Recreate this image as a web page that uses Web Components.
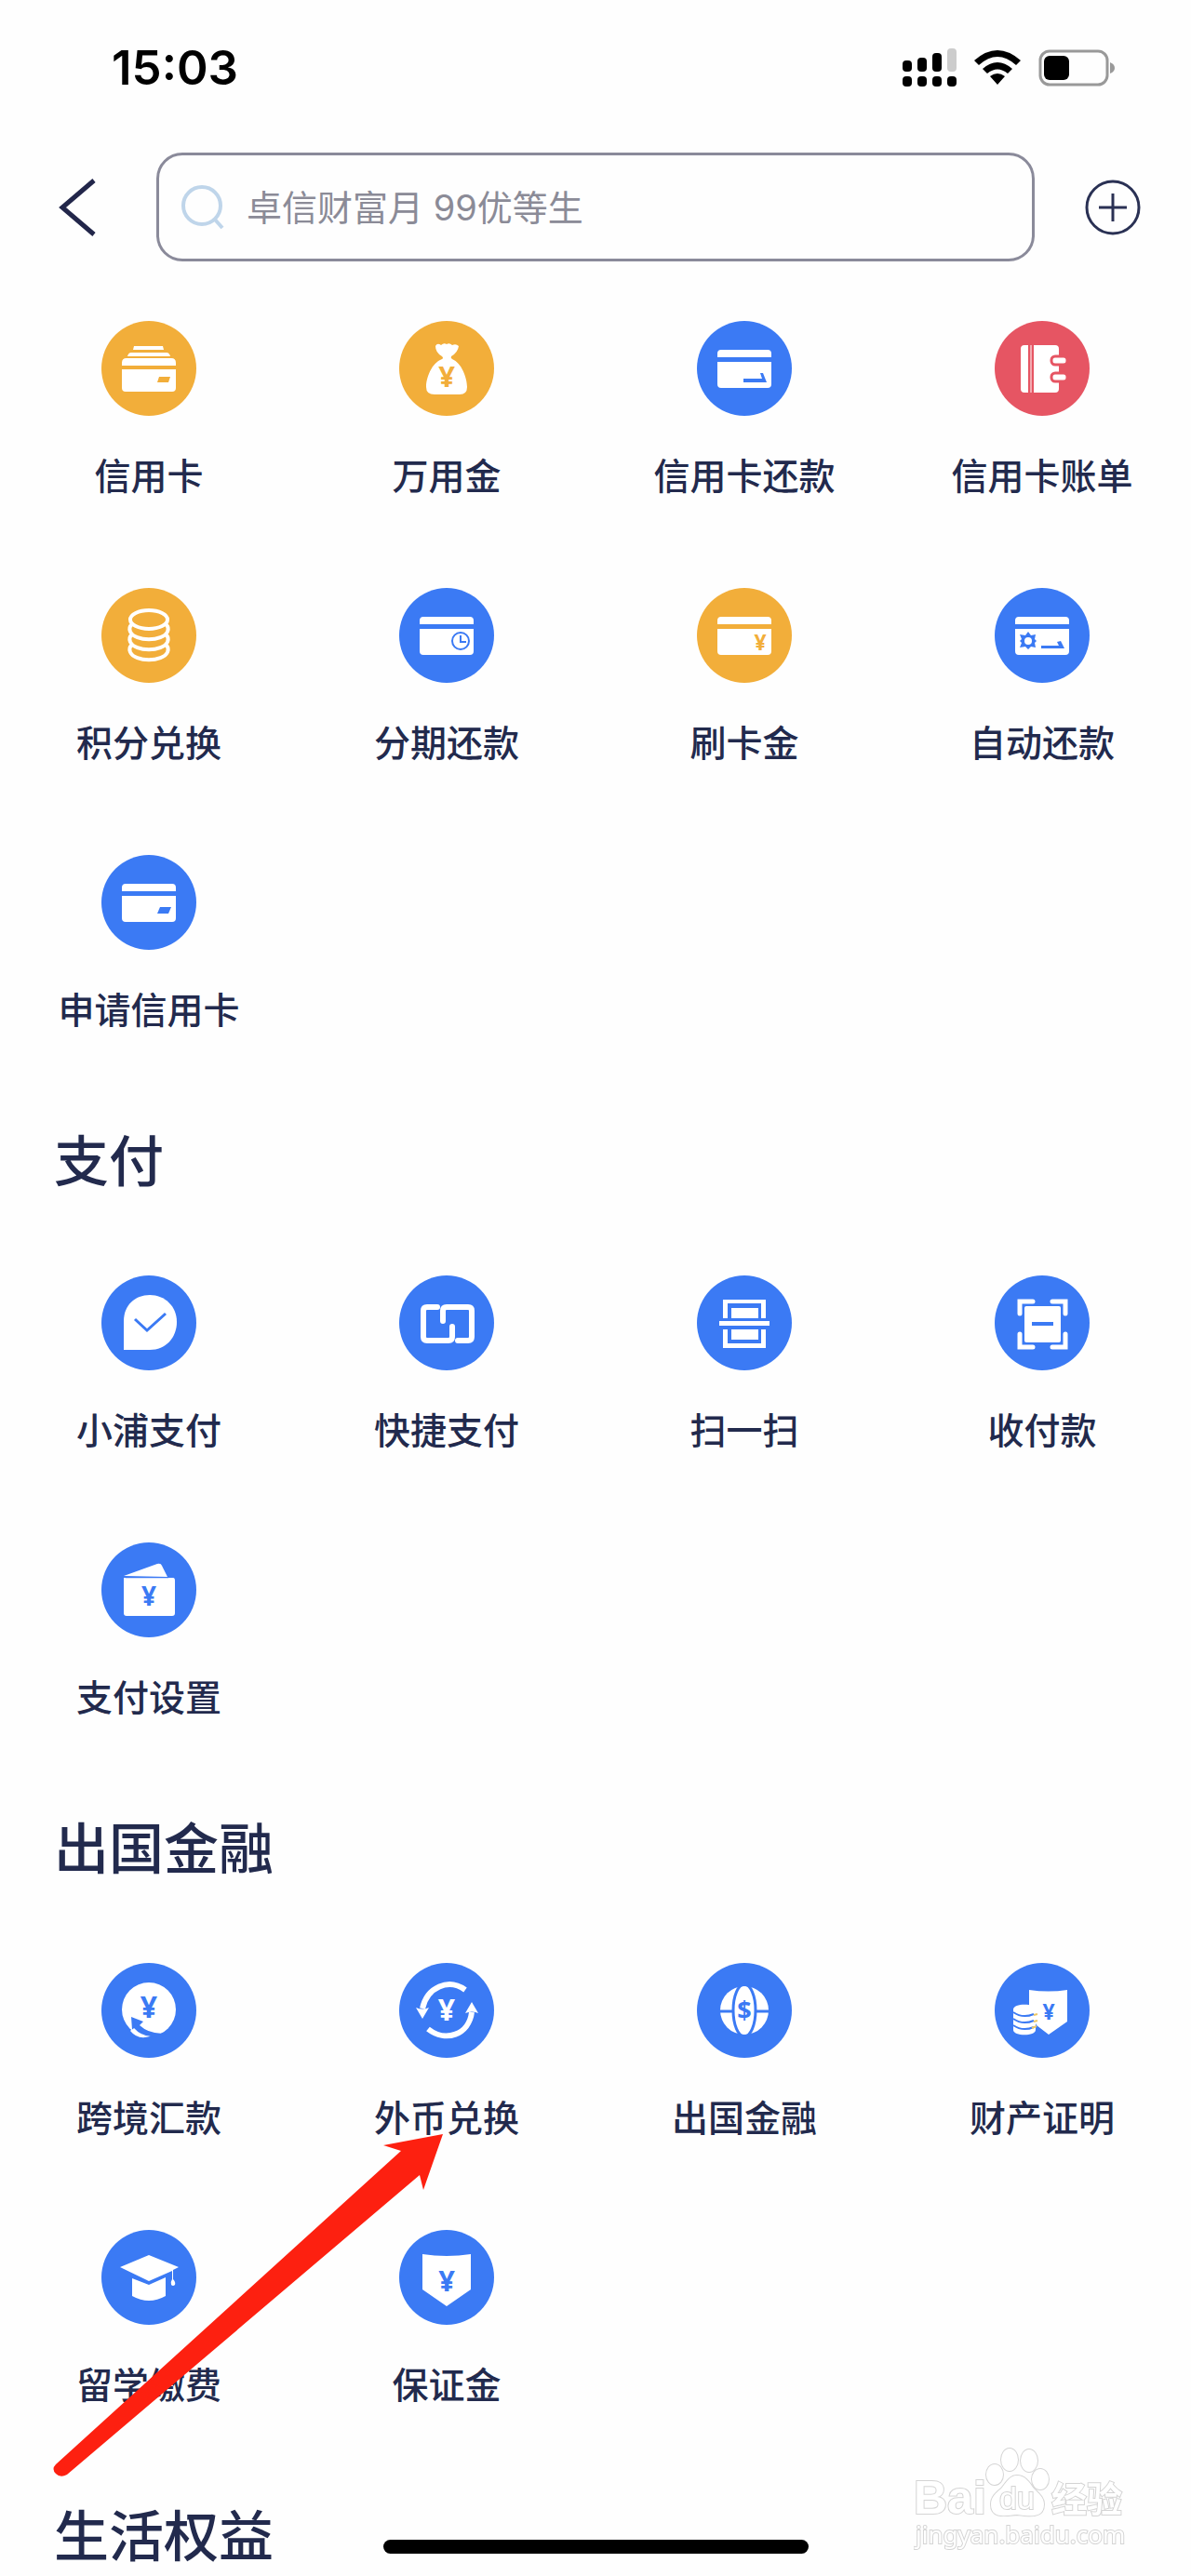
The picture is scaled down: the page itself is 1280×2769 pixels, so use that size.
<!DOCTYPE html>
<html lang="zh-CN">
<head>
<meta charset="utf-8">
<meta name="viewport" content="width=device-width, initial-scale=1">
<title>全部功能</title>
<style>
  body {
    margin: 0;
    background: #fefefe;
    color: #222a4d;
    font-family: "Noto Sans CJK SC", sans-serif;
  }
</style>
</head>
<body>
<bank-page></bank-page>

<script>
  const card = `<path d="M22 39v-4a4 4 0 0 1 4-4h50a4 4 0 0 1 4 4v4zM22 44h58v24a4 4 0 0 1-4 4H26a4 4 0 0 1-4-4z"/>`;
  const yen = (x, y, size, fill = "var(--tone)") =>
    `<text x="${x}" y="${y}" font-size="${size}" style="fill:${fill}">¥</text>`;

  // glyphs are drawn in white on a 102 x 102 disc, --tone is the disc colour
  const ICONS = {
    cards: `
      <path d="M34 31l1-4h31l1 4zM28 38q1-4 4-4h38q3 0 4 4zM22 48v-3q0-5 5-5h48q5 0 5 5v3zM22 52h58v20a4 4 0 0 1-4 4H26a4 4 0 0 1-4-4z"/>
      <path class="tone" d="M62 60h12l-2 6H60z"/>`,
    bag: `
      <path d="M39 27q2-4 6-1 3-3 6-1 3-2 6 1 4-2 7 1-1 7-8 11-1 2 1 3c10 4 16 20 16 30q0 8-8 8H38q-9 0-9-8c0-10 6-26 17-30q2-1 0-3-7-4-7-11z"/>
      ${yen(51, 71, 31)}`,
    repay: `${card}<path class="tone" d="M50 66v-4h20l-2-6h3l4 10z"/>`,
    bill: `
      <path d="M36 26v51h-4q-4 0-4-4V30q0-4 4-4zM42 26h23q4 0 4 4v43q0 4-4 4H42z"/>
      <path d="M38 26h2v51h-2z" opacity=".5"/>
      <g class="tone-line" stroke-width="3"><rect x="61" y="38" width="17" height="9" rx="4"/><rect x="61" y="56" width="17" height="9" rx="4"/></g>`,
    coins: `
      <g class="line" stroke-width="4">
        <ellipse cx="51" cy="34" rx="20" ry="10"/>
        <path d="M33 39q-4 3-2 8c5 11 35 11 40 0q2-5-2-8M33 50q-4 3-2 8c5 11 35 11 40 0q2-5-2-8M33 61q-4 3-2 8c5 11 35 11 40 0q2-5-2-8"/>
      </g>`,
    period: `${card}
      <g class="tone-line" stroke-width="2"><circle cx="66" cy="57" r="9"/><path d="M66 51v7h6"/></g>`,
    cash: `${card}${yen(68, 67, 23)}`,
    auto: `${card}
      <path class="tone" d="M36 47l3 4 5-1-1 5 2 2-2 2 1 5-5-1-3 3-3-3-6 1 2-5-2-2 2-2-2-5 6 1z"/>
      <circle cx="36" cy="57" r="4"/>
      <path class="tone" d="M50 65v-3h19l-2-4 4-1 4 8z"/>`,
    apply: `${card}<path class="tone" d="M63 56h12l-3 7H60z"/>`,
    check: `
      <path d="M24 80V49C24 32 36 21 52 21s29 12 29 29-12 30-29 30z"/>
      <path class="tone-line bare" stroke-width="3" d="M36 47l13 12 20-18"/>`,
    quick: `
      <g class="line" stroke-width="6">
        <path d="M41 34H30q-4 0-4 4v28q0 4 4 4h23q4 0 4-4V55"/>
        <path d="M47 49V38q0-4 4-4h23q4 0 4 4v28q0 4-4 4H63"/>
      </g>`,
    scan: `
      <path d="M28 46V26h46v20h-5V30H33v16zM28 58v20h46V58h-5v15H33V58zM37 35h29v11H37zM37 58h29v11H37zM24 49h54v5H24z"/>`,
    receive: `
      <g class="line" stroke-width="5">
        <path d="M27 41V28h14M62 28h14v13M76 63v14H62M41 77H27V63"/>
      </g>
      <rect x="32" y="33" width="39" height="39" rx="2"/>
      <path class="tone-line bare" stroke-width="4" d="M40 52h23"/>`,
    wallet: `
      <path d="M24 36l36-13q4-1 5 2l6 12zM26 38h51q2 0 2 3v35q0 3-3 3H27q-3 0-3-3V38z"/>
      <path class="tone-line bare" stroke-width="1" d="M26 38h46" opacity=".5"/>
      ${yen(51, 68, 28)}`,
    remit: `
      <circle cx="51" cy="50" r="29"/>
      <path class="tone" d="M32 58l13 5-4 4q12 11 30 8-7 5-18 4-11-1-18-9l-2 2z"/>
      <path d="M33 71q7 7 19 8-13 4-21-6z"/>
      ${yen(51, 59, 32)}`,
    exchange: `
      <path class="line bare" stroke-width="6" d="M71 29C53 16 30 26 25 49M31 71c19 15 44 6 47-18"/>
      <path d="M18 48q7 3 14 0l-7 12zM71 54q7-3 14 0l-7-12z"/>
      ${yen(51, 62, 32, "#fff")}`,
    globe: `
      <circle cx="51" cy="51" r="26"/>
      <g class="tone-line bare" stroke-width="3"><ellipse cx="51" cy="51" rx="12" ry="28"/><path d="M24 52h15M63 52h15"/></g>
      <text x="51" y="61" font-size="27" style="fill:var(--tone)">$</text>`,
    proof: `
      <path d="M37 29q21 3 41 0v34L58 77 45 67 37 50z"/>
      <path d="M20 50c0-7 24-7 24 0v22c0 7-24 7-24 0z"/>
      <path class="tone-line bare" stroke-width="2" d="M20 53q10 7 22 2M20 60q10 7 22 2M20 67q10 7 22 2"/>
      <path d="M42 56l4-1M42 63l4-1M40 70l5-2" style="stroke:#ecc765;stroke-width:2"/>
      ${yen(58, 61, 23)}`,
    study: `
      <path d="M20 40l31-13 32 13-6 3v10q3 3 2 6-2 2-4 0-1-3 1-6v-9L51 55z"/>
      <path d="M33 52l18 7 18-8v20q-18 10-36 0z"/>`,
    deposit: `
      <path d="M25 26q26 4 52 0v38L51 82 25 64z"/>
      ${yen(51, 66, 31)}`
  };

  const TONES = { blue: "#3b7af4", gold: "#f2ae3a", red: "#e65563" };

  const SECTIONS = [
    {
      title: "",
      items: [
        ["信用卡", "cards", "gold"],
        ["万用金", "bag", "gold"],
        ["信用卡还款", "repay", "blue"],
        ["信用卡账单", "bill", "red"],
        ["积分兑换", "coins", "gold"],
        ["分期还款", "period", "blue"],
        ["刷卡金", "cash", "gold"],
        ["自动还款", "auto", "blue"],
        ["申请信用卡", "apply", "blue"]
      ]
    },
    {
      title: "支付",
      items: [
        ["小浦支付", "check", "blue"],
        ["快捷支付", "quick", "blue"],
        ["扫一扫", "scan", "blue"],
        ["收付款", "receive", "blue"],
        ["支付设置", "wallet", "blue"]
      ]
    },
    {
      title: "出国金融",
      items: [
        ["跨境汇款", "remit", "blue"],
        ["外币兑换", "exchange", "blue"],
        ["出国金融", "globe", "blue"],
        ["财产证明", "proof", "blue"],
        ["留学缴费", "study", "blue"],
        ["保证金", "deposit", "blue"]
      ]
    },
    { title: "生活权益", items: [] }
  ];

  class StatusBar extends HTMLElement {
    constructor() {
      super();
      this.attachShadow({ mode: "open" });
      this.shadowRoot.innerHTML = `
        <style>
          :host {
            display: flex;
            justify-content: space-between;
            align-items: center;
            height: 146px;
            padding: 0 82px 0 120px;
            color: #000;
          }
          time {
            font: 600 51px/60px Inter, sans-serif;
          }
          .icons {
            display: flex;
            align-items: center;
            gap: 19px;
          }
          svg {
            display: block;
          }
        </style>
        <time>15:03</time>
        <div class="icons">
          <svg width="58" height="42" viewBox="0 0 58 42">
            <rect y="13" width="10" height="12" rx="4"/>
            <rect x="16" y="10" width="10" height="15" rx="4"/>
            <rect x="32" y="5" width="10" height="20" rx="4"/>
            <rect x="48" width="10" height="25" rx="4" fill="#ccc"/>
            <rect y="30" width="10" height="11" rx="4"/>
            <rect x="16" y="30" width="10" height="11" rx="4"/>
            <rect x="32" y="30" width="10" height="11" rx="4"/>
            <rect x="48" y="30" width="10" height="11" rx="4"/>
          </svg>
          <svg width="50" height="38" viewBox="0 0 50 38">
            <path d="M0 11Q25-11 50 11l-5 5Q25-2 5 16zM9 20q16-14 32 0l-5 5q-11-9-22 0zM17 28q8-6 16 0l-8 9z"/>
          </svg>
          <svg width="82" height="40" viewBox="0 0 82 40">
            <rect x="2" y="2" width="72" height="36" rx="10" fill="none" stroke="#999" stroke-width="3"/>
            <rect x="6" y="7" width="27" height="26" rx="6"/>
            <path d="M77 14q5 2 5 6t-5 6z" fill="#999"/>
          </svg>
        </div>
      `;
    }
  }
  customElements.define("status-bar", StatusBar);

  class SearchHeader extends HTMLElement {
    constructor() {
      super();
      this.attachShadow({ mode: "open" });
      this.shadowRoot.innerHTML = `
        <style>
          :host {
            display: flex;
            align-items: center;
            padding: 18px 54px 0 58px;
          }
          button {
            flex: none;
            padding: 0;
            border: 0;
            background: none;
          }
          svg {
            display: block;
            fill: none;
          }
          label {
            flex: 1;
            min-width: 0;
            box-sizing: border-box;
            display: flex;
            align-items: center;
            gap: 24px;
            height: 117px;
            margin: 0 54px 0 62px;
            padding: 0 24px;
            border: 3px solid #8a8a9a;
            border-radius: 28px;
          }
          input {
            flex: 1;
            min-width: 0;
            padding: 0;
            border: 0;
            outline: 0;
            background: none;
            color: inherit;
            font: 400 38px/56px Inter, "Noto Sans CJK SC", sans-serif;
          }
          input::placeholder {
            color: #8b8b97;
            opacity: 1;
          }
        </style>
        <button aria-label="返回">
          <svg width="48" height="64" viewBox="0 0 48 64" stroke="#22264a" stroke-width="5"><path d="M43 3L9 32l34 29"/></svg>
        </button>
        <label>
          <svg width="46" height="48" viewBox="0 0 46 48" stroke="#bfd5ea" stroke-width="4"><circle cx="22" cy="22" r="20"/><path d="M36 37l8 9"/></svg>
          <input type="search" aria-label="搜索" placeholder="卓信财富月 99优等生">
        </label>
        <button aria-label="更多">
          <svg width="60" height="60" viewBox="0 0 60 60" stroke="#2a3154" stroke-width="3"><circle cx="30" cy="30" r="28"/><path d="M30 15v30M15 30h30"/></svg>
        </button>
      `;
    }
  }
  customElements.define("search-header", SearchHeader);

  class FeatureTile extends HTMLElement {
    connectedCallback() {
      const root = this.attachShadow({ mode: "open" });
      root.innerHTML = `
        <style>
          :host {
            display: block;
            min-width: 0;
            --tone: ${TONES[this.getAttribute("tone")]};
          }
          a {
            display: flex;
            flex-direction: column;
            align-items: center;
            gap: 34px;
            color: inherit;
            text-decoration: none;
            font-size: 39px;
            font-weight: 500;
            line-height: 56px;
            white-space: nowrap;
          }
          svg {
            display: block;
            width: 102px;
            height: 102px;
            border-radius: 50%;
            background: var(--tone);
            fill: #fff;
          }
          text {
            font-family: "Noto Sans", sans-serif;
            font-weight: 700;
            text-anchor: middle;
          }
          .tone { fill: var(--tone); }
          .line { fill: none; stroke: #fff; stroke-linecap: round; }
          .tone-line { stroke: var(--tone); }
          .bare { fill: none; stroke-linecap: butt; }
        </style>
        <a href="#">
          <svg viewBox="0 0 102 102" aria-hidden="true">${ICONS[this.getAttribute("icon")]}</svg>
          <slot></slot>
        </a>
      `;
    }
  }
  customElements.define("feature-tile", FeatureTile);

  class FeatureSection extends HTMLElement {
    constructor() {
      super();
      this.attachShadow({ mode: "open" });
      this.shadowRoot.innerHTML = `
        <style>
          :host {
            display: block;
          }
          ::slotted(h2) {
            margin: 94px 58px 86px;
            font-size: 59px;
            font-weight: 500;
            line-height: 80px;
          }
          .grid {
            display: grid;
            grid-template-columns: repeat(4, 1fr);
            row-gap: 95px;
          }
        </style>
        <slot name="title"></slot>
        <div class="grid"><slot></slot></div>
      `;
    }
  }
  customElements.define("feature-section", FeatureSection);

  // red pointer laid over the grid
  class PointerArrow extends HTMLElement {
    constructor() {
      super();
      this.attachShadow({ mode: "open" });
      this.shadowRoot.innerHTML = `
        <style>
          :host {
            position: absolute;
            left: 57px;
            top: 2293px;
            pointer-events: none;
          }
          svg {
            display: block;
          }
        </style>
        <svg width="420" height="372" viewBox="0 0 420 372">
          <path fill="#fd2010" d="M419 1L355 13l19 6L3 356q-5 5 0 10 5 5 12 1L394 45l4 16z"/>
        </svg>
      `;
    }
  }
  customElements.define("pointer-arrow", PointerArrow);

  class WaterMark extends HTMLElement {
    constructor() {
      super();
      this.attachShadow({ mode: "open" });
      this.shadowRoot.innerHTML = `
        <style>
          :host {
            position: fixed;
            right: 60px;
            bottom: 24px;
            pointer-events: none;
          }
          svg {
            display: block;
            fill: #fff;
            stroke: #d4d4d4;
            stroke-width: 2px;
            paint-order: stroke;
          }
          .bai, .du { font-family: "Liberation Sans", sans-serif; font-weight: 700; }
          .bai { font-size: 50px; }
          .du { font-size: 34px; font-weight: 400; }
          .cn { font-family: "Noto Sans CJK SC", sans-serif; font-size: 38px; font-weight: 700; }
          .url { font-family: "Noto Sans", sans-serif; font-size: 26px; }
        </style>
        <svg width="238" height="114" viewBox="0 0 238 114">
          <text class="bai" x="0" y="71">Bai</text>
          <ellipse cx="87" cy="29" rx="9" ry="11"/>
          <ellipse cx="103" cy="13" rx="9" ry="12"/>
          <ellipse cx="124" cy="14" rx="9" ry="12"/>
          <ellipse cx="136" cy="34" rx="9" ry="11"/>
          <path d="M111 30c-8 0-12 8-17 14-6 5-11 9-11 17 0 16 16 12 28 11 14 2 29 4 29-11 0-8-6-12-11-17-5-7-9-14-18-14z"/>
          <text class="du" x="92" y="66">du</text>
          <text class="cn" x="148" y="69">经验</text>
          <text class="url" x="2" y="103">jingyan.baidu.com</text>
        </svg>
      `;
    }
  }
  customElements.define("water-mark", WaterMark);

  class BankPage extends HTMLElement {
    constructor() {
      super();
      this.attachShadow({ mode: "open" });
    }

    connectedCallback() {
      this.render();
    }

    renderSection(section) {
      const title = section.title ? `<h2 slot="title">${section.title}</h2>` : "";
      const tiles = section.items
        .map(([label, icon, tone]) => `<feature-tile icon="${icon}" tone="${tone}">${label}</feature-tile>`)
        .join("");
      return `<feature-section>${title}${tiles}</feature-section>`;
    }

    render() {
      this.shadowRoot.innerHTML = `
        <style>
          :host {
            display: block;
            position: relative;
            height: 100vh;
            overflow: hidden;
          }
          main {
            padding-top: 64px;
          }
          .home {
            position: fixed;
            bottom: 24px;
            left: 50%;
            width: 457px;
            height: 15px;
            margin-left: -228px;
            border-radius: 8px;
            background: #000;
          }
        </style>
        <status-bar></status-bar>
        <search-header></search-header>
        <main>${SECTIONS.map(s => this.renderSection(s)).join("")}</main>
        <pointer-arrow></pointer-arrow>
        <water-mark></water-mark>
        <div class="home"></div>
      `;
    }
  }
  customElements.define("bank-page", BankPage);
</script>
</body>
</html>
